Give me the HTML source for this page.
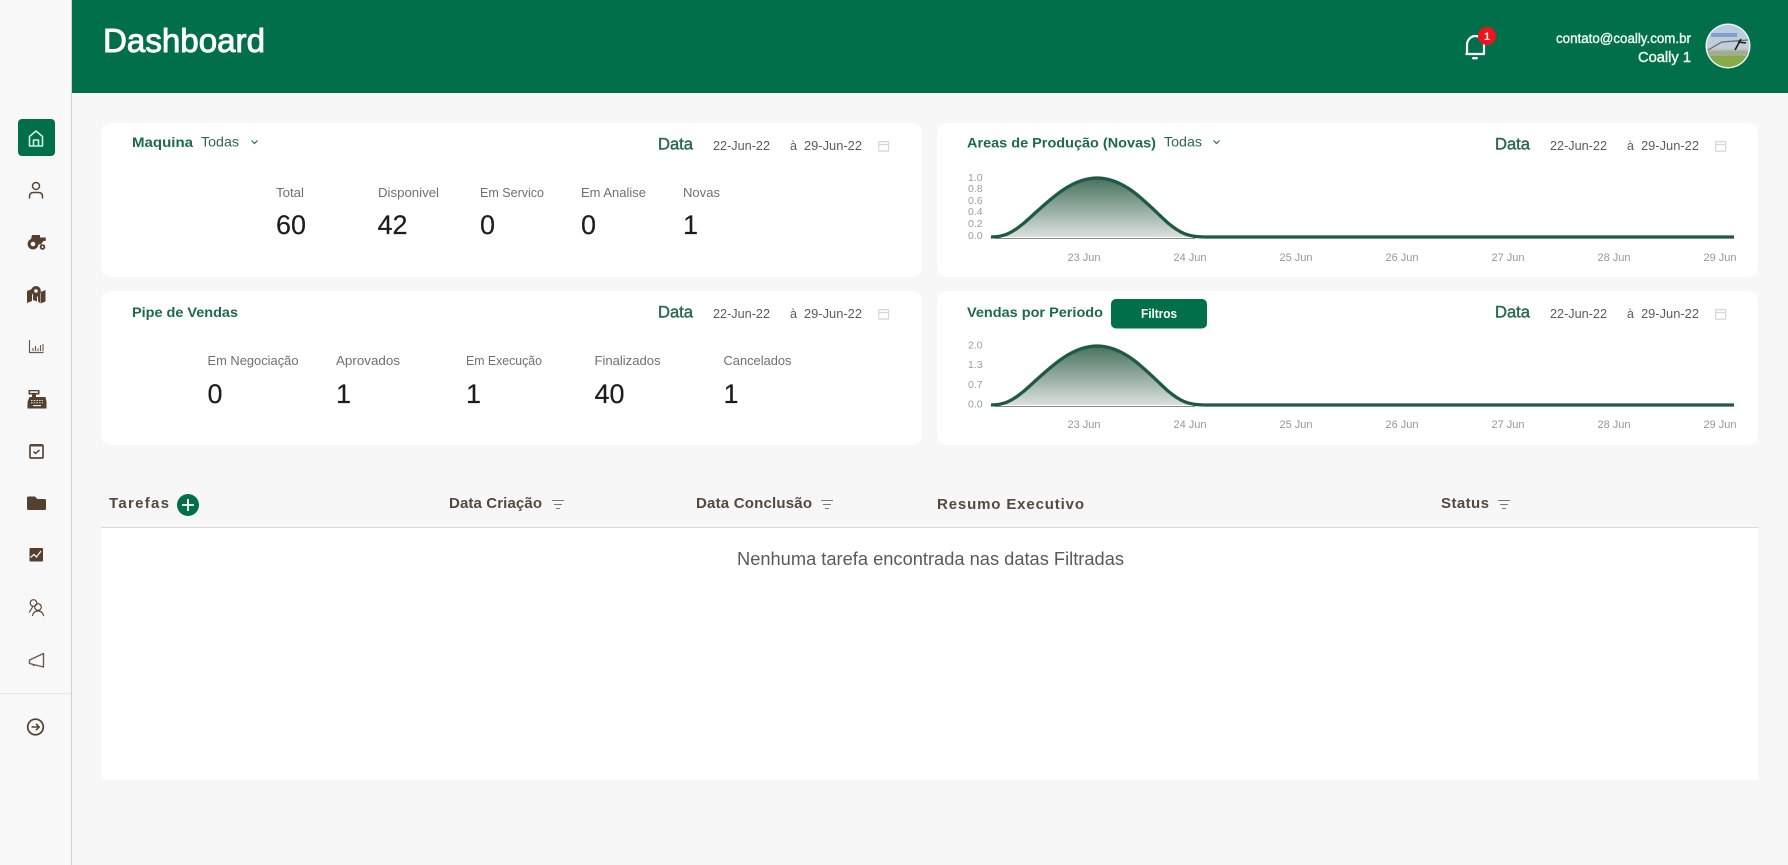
<!DOCTYPE html>
<html lang="pt-BR"><head><meta charset="utf-8"><title>Dashboard</title>
<style>
html,body{margin:0;padding:0;background:#f7f7f7;width:1788px;height:865px;overflow:hidden}
svg{display:block;font-family:"Liberation Sans",Arial,sans-serif}
.t{fill:#1c6a4c;font-weight:bold;font-size:14px}
.td{fill:#2b6a50;font-size:14px}
.l{fill:#707070;font-size:13px}
.v{fill:#1d1d1d;font-size:27px;stroke:#1d1d1d;stroke-width:.2}
.da{fill:#2a6a50;font-size:16.5px;stroke:#2a6a50;stroke-width:.45}
.d{fill:#5c5c5c;font-size:12.5px}
.y{fill:#9a9aa5;font-size:10.5px}
.x{fill:#96969e;font-size:11px;text-anchor:middle}
.h{fill:#55493d;font-weight:bold;font-size:15px}
.s{fill:none;stroke:#5a4638;stroke-width:1.5;stroke-linecap:round;stroke-linejoin:round}
.f{fill:#54402f}
.fi{fill:none;stroke:#7a7a7a;stroke-width:1}
.cal{fill:none;stroke:#d6d6d6;stroke-width:1.2}
.ch{fill:none;stroke:#2b6a50;stroke-width:1.2}
</style></head>
<body>
<svg width="1788" height="865" viewBox="0 0 1788 865" xmlns="http://www.w3.org/2000/svg">
<defs>
<linearGradient id="g" x1="0" y1="0" x2="0" y2="1"><stop offset="0" stop-color="#47725c"/><stop offset="1" stop-color="#dbe0dd"/></linearGradient>
<linearGradient id="av" x1="0" y1="0" x2="0" y2="1"><stop offset="0" stop-color="#b6cbe0"/><stop offset=".55" stop-color="#c3cfd8"/><stop offset=".68" stop-color="#8b9f6e"/><stop offset="1" stop-color="#7fa64a"/></linearGradient>
<clipPath id="avc"><circle cx="1728" cy="46" r="21"/></clipPath>
</defs>
<rect width="1788" height="865" fill="#f7f7f7"/>
<rect width="71" height="865" fill="#f8f8f8"/>
<rect x="71" width="1" height="865" fill="#cfcfcf"/>
<rect x="72" width="1716" height="93" fill="#006f4a"/>
<text x="103" y="52" font-size="33" fill="#fff" stroke="#fff" stroke-width=".9" textLength="162" lengthAdjust="spacingAndGlyphs">Dashboard</text>

<!-- header right -->
<path d="M1467 54v-9a8.5 9 0 0 1 17 0v9zM1465.5 54h19" fill="none" stroke="#fff" stroke-width="2.200" stroke-linejoin="round"/>
<rect x="1472" y="57" width="6" height="2.400" rx="1.200" fill="#fff"/>
<circle cx="1487" cy="36" r="9" fill="#f0121c"/>
<text x="1487" y="40" font-size="11" font-weight="bold" fill="#fff" text-anchor="middle">1</text>
<text x="1556" y="43" font-size="13.5" fill="#eaf6f0" stroke="#eaf6f0" stroke-width=".4" textLength="135" lengthAdjust="spacingAndGlyphs">contato@coally.com.br</text>
<text x="1638" y="62" font-size="15" fill="#eaf6f0" stroke="#eaf6f0" stroke-width=".45" textLength="53" lengthAdjust="spacingAndGlyphs">Coally 1</text>
<circle cx="1728" cy="46" r="22.5" fill="#e8f3ec"/>
<g clip-path="url(#avc)">
<rect x="1706" y="24" width="44" height="44" fill="url(#av)"/>
<rect x="1711" y="33" width="26" height="4" fill="#7ea0cb"/>
<path d="M1708 50L1722 42L1748 40" stroke="#5d6c75" stroke-width="1.200" fill="none"/>
<path d="M1735 50L1741 39M1738 42L1746 43" stroke="#1c1c1c" stroke-width="1.600" fill="none"/>
<rect x="1706" y="57" width="44" height="11" fill="#86ac45"/>
<rect x="1708" y="51" width="38" height="5" fill="#a3ad8c"/>
</g>

<!-- sidebar -->
<rect x="18" y="119" width="37" height="37" rx="4" fill="#006f4a"/>
<path d="M29.500 146v-9.500l6.500-5.500 6.500 5.500v9.500zM33.500 146v-6h5v6" fill="none" stroke="#c9f2e0" stroke-width="1.600" stroke-linejoin="round"/>
<circle class="s" cx="36" cy="186" r="3.500" stroke-width="1.300"/>
<path class="s" stroke-width="1.300" d="M29.500 198v-1.500q0-4 4-4h5q4 0 4 4v1.500"/>
<!-- tractor -->
<g class="f"><path d="M32 235h8v2.500h5.500l.5 3-3 1-2 3h-5.500l-1-3-3.500-2z"/><circle cx="33" cy="244" r="5.400"/><circle cx="42.500" cy="247" r="2.800"/></g>
<circle cx="33" cy="244" r="2.300" fill="#f8f8f8"/><circle cx="42.500" cy="247" r="1" fill="#f8f8f8"/>
<!-- map -->
<g class="f"><path d="M27 291l5-2v12l-5 2zM33 289.500l4 2.500v9.500l-4-1.500zM40.500 292l5-2v11.500l-5 2zM38 292l2 .5v10.500l-2-1.500z"/><path d="M36 286a4.800 4.800 0 0 1 4.800 4.800q0 3-4.800 7.200q-4.800-4.200-4.800-7.200a4.800 4.800 0 0 1 4.800-4.800z"/></g>
<circle cx="36" cy="291" r="1.800" fill="#f8f8f8"/>
<!-- chart -->
<path d="M29.500 340v12.500h14" fill="none" stroke="#6a5a4d" stroke-width="1.200"/>
<path d="M33 351v-3M35.500 351v-5M38 351v-2.500M40.500 351v-6M43 351v-7" stroke="#6a5a4d" stroke-width="1.100" fill="none"/>
<!-- register -->
<g class="f"><rect x="28.500" y="390" width="11" height="4.500"/><rect x="32" y="394.500" width="4" height="3"/><path d="M29.500 397h16l1 5v6.500h-19v-6.500z"/></g>
<path d="M31 400.500h12M31 402.800h12" stroke="#e8e2da" stroke-width="1" stroke-dasharray="1.500 1.200"/><rect x="33" y="405" width="8" height="1.200" fill="#e8e2da"/><rect x="30" y="391.200" width="8" height="1.800" fill="#e8e2da"/>
<!-- calendar check -->
<rect x="30" y="445" width="13" height="13" rx="1" fill="none" stroke="#5a4638" stroke-width="1.700"/><rect x="31" y="444" width="11" height="2.500" fill="#5a4638"/>
<path d="M33.500 451.500l2 2 4-3.500" fill="none" stroke="#5a4638" stroke-width="1.500"/>
<!-- folder -->
<path class="f" d="M27 498a1.500 1.500 0 0 1 1.500-1.500h6.500l2.500 2.500h7a1.500 1.500 0 0 1 1.500 1.500v8a1.500 1.500 0 0 1-1.500 1.500h-16a1.500 1.500 0 0 1-1.500-1.500z"/>
<!-- chart box -->
<rect class="f" x="29.500" y="548" width="13.500" height="13.500" rx="1"/>
<path d="M30.500 557.500l3.500-3 2.500 2.500 4.500-6" fill="none" stroke="#f4f0ea" stroke-width="1.300"/>
<!-- users -->
<g class="s" style="stroke-width:1.200"><circle cx="33.500" cy="603" r="3.300"/><circle cx="38" cy="607" r="3.300"/><path d="M29.500 612l3-5M32.500 615.500q1-4.500 5.500-4.500t5.500 4.500"/></g>
<!-- megaphone -->
<path d="M29.500 660l14-6.500v13.500l-14-3.500zM32.500 664l1.500 2" fill="none" stroke="#6a5a4d" stroke-width="1.400" stroke-linejoin="round"/>
<rect y="693" width="71" height="1" fill="#e6e6e6"/>
<circle cx="35.500" cy="727" r="7.800" fill="none" stroke="#54402f" stroke-width="1.700"/>
<path d="M31.500 727h7.500M36 723.800l3.200 3.200-3.200 3.200" fill="none" stroke="#54402f" stroke-width="1.500"/>

<!-- cards -->
<rect x="101" y="123" width="821" height="154" rx="10" fill="#fff"/>
<rect x="101" y="291" width="821" height="154" rx="10" fill="#fff"/>
<rect x="937" y="123" width="821" height="154" rx="10" fill="#fff"/>
<rect x="937" y="291" width="821" height="154" rx="10" fill="#fff"/>

<!-- card 1 -->
<text class="t" x="132" y="147" textLength="61" lengthAdjust="spacingAndGlyphs">Maquina</text>
<text class="td" x="201" y="146.500" textLength="38" lengthAdjust="spacingAndGlyphs">Todas</text>
<path class="ch" d="M251.500 140.500l3 3 3-3"/>
<text class="l" x="276" y="197" textLength="28" lengthAdjust="spacingAndGlyphs">Total</text>
<text class="l" x="378" y="197" textLength="61" lengthAdjust="spacingAndGlyphs">Disponivel</text>
<text class="l" x="480" y="197" textLength="64" lengthAdjust="spacingAndGlyphs">Em Servico</text>
<text class="l" x="581" y="197" textLength="65" lengthAdjust="spacingAndGlyphs">Em Analise</text>
<text class="l" x="683" y="197" textLength="37" lengthAdjust="spacingAndGlyphs">Novas</text>
<text class="v" x="276" y="234" textLength="30" lengthAdjust="spacingAndGlyphs">60</text>
<text class="v" x="377.500" y="234" textLength="30" lengthAdjust="spacingAndGlyphs">42</text>
<text class="v" x="480" y="234">0</text>
<text class="v" x="581" y="234">0</text>
<text class="v" x="683" y="234">1</text>

<!-- card 2 -->
<text class="t" x="132" y="317" textLength="106" lengthAdjust="spacingAndGlyphs">Pipe de Vendas</text>
<text class="l" x="207.500" y="365" textLength="91" lengthAdjust="spacingAndGlyphs">Em Negociação</text>
<text class="l" x="336" y="365" textLength="64" lengthAdjust="spacingAndGlyphs">Aprovados</text>
<text class="l" x="466" y="365" textLength="76" lengthAdjust="spacingAndGlyphs">Em Execução</text>
<text class="l" x="594.500" y="365" textLength="66" lengthAdjust="spacingAndGlyphs">Finalizados</text>
<text class="l" x="723.500" y="365" textLength="68" lengthAdjust="spacingAndGlyphs">Cancelados</text>
<text class="v" x="207.500" y="403">0</text>
<text class="v" x="336" y="403">1</text>
<text class="v" x="466" y="403">1</text>
<text class="v" x="594.500" y="403" textLength="30" lengthAdjust="spacingAndGlyphs">40</text>
<text class="v" x="723.500" y="403">1</text>

<!-- dates -->
<g>
<text class="da" x="658" y="149.500" textLength="35" lengthAdjust="spacingAndGlyphs">Data</text>
<text class="d" x="713" y="150" textLength="57" lengthAdjust="spacingAndGlyphs">22-Jun-22</text>
<text class="d" x="790" y="150">à</text>
<text class="d" x="804" y="150" textLength="58" lengthAdjust="spacingAndGlyphs">29-Jun-22</text>
<rect class="cal" x="878.600" y="141.600" width="10" height="9.500" rx="1"/><path class="cal" d="M878.600 144.500h10"/>
</g>
<g>
<text class="da" x="658" y="317.500" textLength="35" lengthAdjust="spacingAndGlyphs">Data</text>
<text class="d" x="713" y="318" textLength="57" lengthAdjust="spacingAndGlyphs">22-Jun-22</text>
<text class="d" x="790" y="318">à</text>
<text class="d" x="804" y="318" textLength="58" lengthAdjust="spacingAndGlyphs">29-Jun-22</text>
<rect class="cal" x="878.600" y="309.600" width="10" height="9.500" rx="1"/><path class="cal" d="M878.600 312.500h10"/>
</g>
<g>
<text class="da" x="1495" y="149.500" textLength="35" lengthAdjust="spacingAndGlyphs">Data</text>
<text class="d" x="1550" y="150" textLength="57" lengthAdjust="spacingAndGlyphs">22-Jun-22</text>
<text class="d" x="1627" y="150">à</text>
<text class="d" x="1641" y="150" textLength="58" lengthAdjust="spacingAndGlyphs">29-Jun-22</text>
<rect class="cal" x="1715.600" y="141.600" width="10" height="9.500" rx="1"/><path class="cal" d="M1715.600 144.500h10"/>
</g>
<g>
<text class="da" x="1495" y="317.500" textLength="35" lengthAdjust="spacingAndGlyphs">Data</text>
<text class="d" x="1550" y="318" textLength="57" lengthAdjust="spacingAndGlyphs">22-Jun-22</text>
<text class="d" x="1627" y="318">à</text>
<text class="d" x="1641" y="318" textLength="58" lengthAdjust="spacingAndGlyphs">29-Jun-22</text>
<rect class="cal" x="1715.600" y="309.600" width="10" height="9.500" rx="1"/><path class="cal" d="M1715.600 312.500h10"/>
</g>

<!-- chart 1 -->
<text class="t" x="967" y="147.500" textLength="189" lengthAdjust="spacingAndGlyphs">Areas de Produção (Novas)</text>
<text class="td" x="1164" y="146.500" textLength="38" lengthAdjust="spacingAndGlyphs">Todas</text>
<path class="ch" d="M1213.500 140.500l3 3 3-3"/>
<text class="y" x="968" y="181">1.0</text>
<text class="y" x="968" y="192">0.8</text>
<text class="y" x="968" y="204">0.6</text>
<text class="y" x="968" y="215">0.4</text>
<text class="y" x="968" y="227">0.2</text>
<text class="y" x="968" y="239">0.0</text>
<path d="M991 237C1004 237 1012 233 1024 223C1044 206 1068 178 1097 178C1126 178 1148 205 1168 223C1180 233 1188 237 1205 237Z" fill="url(#g)"/>
<path d="M995 238.500H1195" stroke="#888" stroke-width="1"/>
<path d="M991 237C1004 237 1012 233 1024 223C1044 206 1068 178 1097 178C1126 178 1148 205 1168 223C1180 233 1188 237 1205 237H1734" fill="none" stroke="#1d5a43" stroke-width="3.300"/>
<text class="x" x="1084" y="261">23 Jun</text>
<text class="x" x="1190" y="261">24 Jun</text>
<text class="x" x="1296" y="261">25 Jun</text>
<text class="x" x="1402" y="261">26 Jun</text>
<text class="x" x="1508" y="261">27 Jun</text>
<text class="x" x="1614" y="261">28 Jun</text>
<text class="x" x="1720" y="261">29 Jun</text>

<!-- chart 2 -->
<text class="t" x="967" y="317" textLength="136" lengthAdjust="spacingAndGlyphs">Vendas por Periodo</text>
<rect x="1111" y="299" width="96" height="29.500" rx="5" fill="#006f4a"/>
<text x="1141" y="318" font-size="12.500" font-weight="bold" fill="#fff" textLength="36" lengthAdjust="spacingAndGlyphs">Filtros</text>
<text class="y" x="968" y="348.500">2.0</text>
<text class="y" x="968" y="368">1.3</text>
<text class="y" x="968" y="388">0.7</text>
<text class="y" x="968" y="407.500">0.0</text>
<g transform="translate(0 168)">
<path d="M991 237C1004 237 1012 233 1024 223C1044 206 1068 178 1097 178C1126 178 1148 205 1168 223C1180 233 1188 237 1205 237Z" fill="url(#g)"/>
<path d="M995 238.500H1195" stroke="#888" stroke-width="1"/>
<path d="M991 237C1004 237 1012 233 1024 223C1044 206 1068 178 1097 178C1126 178 1148 205 1168 223C1180 233 1188 237 1205 237H1734" fill="none" stroke="#1d5a43" stroke-width="3.300"/>
</g>
<text class="x" x="1084" y="428">23 Jun</text>
<text class="x" x="1190" y="428">24 Jun</text>
<text class="x" x="1296" y="428">25 Jun</text>
<text class="x" x="1402" y="428">26 Jun</text>
<text class="x" x="1508" y="428">27 Jun</text>
<text class="x" x="1614" y="428">28 Jun</text>
<text class="x" x="1720" y="428">29 Jun</text>

<!-- table -->
<rect x="101" y="528" width="1657" height="252" fill="#fff"/>
<rect x="101" y="527" width="1657" height="1" fill="#d9d9d9"/>
<text class="h" x="109" y="508" textLength="60" lengthAdjust="spacing">Tarefas</text>
<circle cx="188" cy="505" r="11" fill="#006f4a"/>
<path d="M182 505h12M188 499v12" stroke="#fff" stroke-width="1.800"/>
<text class="h" x="449" y="508" textLength="93" lengthAdjust="spacing">Data Criação</text>
<path class="fi" d="M552 500.500h12M554 504.500h8M556 508.500h4"/>
<text class="h" x="696" y="508" textLength="116" lengthAdjust="spacing">Data Conclusão</text>
<path class="fi" d="M821 500.500h12M823 504.500h8M825 508.500h4"/>
<text class="h" x="937" y="509" textLength="147" lengthAdjust="spacing">Resumo Executivo</text>
<text class="h" x="1441" y="508" textLength="48" lengthAdjust="spacing">Status</text>
<path class="fi" d="M1498 500.500h12M1500 504.500h8M1502 508.500h4"/>
<text x="737" y="565" font-size="18" fill="#5a5a5a" textLength="387" lengthAdjust="spacingAndGlyphs">Nenhuma tarefa encontrada nas datas Filtradas</text>
</svg>
</body></html>
